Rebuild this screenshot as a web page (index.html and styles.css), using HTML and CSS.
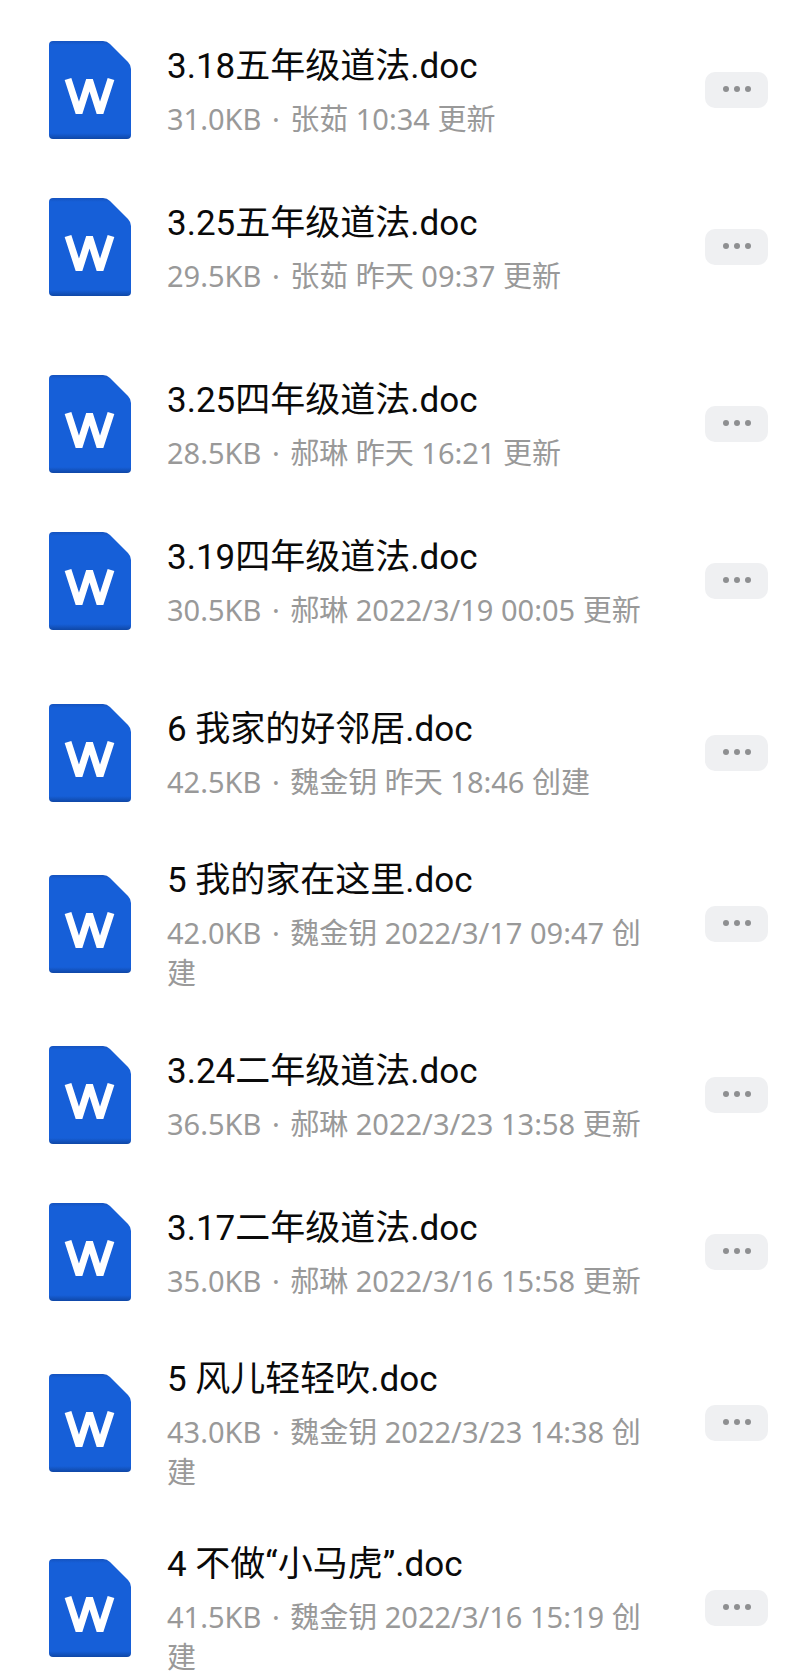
FILE: index.html
```html
<!DOCTYPE html>
<html lang="zh-CN">
<head>
    <meta charset="UTF-8">
    <meta name="viewport" content="width=device-width, initial-scale=1.0">
    <title>文件列表</title>
    <link rel="stylesheet" href="styles.css">
</head>
<body>
    <!-- Shared icons -->
    <svg class="sprite" aria-hidden="true">
        <defs>
            <linearGradient id="paper" x1="0" y1="0" x2="0" y2="1">
                <stop offset="0" stop-color="#1553bf"/>
                <stop offset="0.04" stop-color="#165fd8"/>
                <stop offset="0.94" stop-color="#165fd8"/>
                <stop offset="1" stop-color="#0f47a6"/>
            </linearGradient>
        </defs>
        <symbol id="word" viewBox="0 0 82 98">
            <path fill="url(#paper)" d="M4 0H54Q58 0 61 3L79 21Q82 24 82 28V94Q82 98 78 98H4Q0 98 0 94V4Q0 0 4 0Z"/>
            <path fill="none" stroke="#fff" stroke-width="7" stroke-linejoin="bevel" d="M19 38L30 72L40.500 39L51 72L62 38"/>
        </symbol>
        <symbol id="more" viewBox="0 0 30 6">
            <circle cx="4" cy="3" r="3"/>
            <circle cx="15" cy="3" r="3"/>
            <circle cx="26" cy="3" r="3"/>
        </symbol>
    </svg>

    <main class="files">
        <ul class="group">
            <li class="file">
                <svg class="icon"><use href="#word"/></svg>
                <div class="info">
                    <h2 class="name">3.18五年级道法.doc</h2>
                    <p class="meta">31.0KB <span class="dot">·</span> 张茹 10:34 更新</p>
                </div>
                <button class="more" type="button" aria-label="更多"><svg><use href="#more"/></svg></button>
            </li>
            <li class="file">
                <svg class="icon"><use href="#word"/></svg>
                <div class="info">
                    <h2 class="name">3.25五年级道法.doc</h2>
                    <p class="meta">29.5KB <span class="dot">·</span> 张茹 昨天 09:37 更新</p>
                </div>
                <button class="more" type="button" aria-label="更多"><svg><use href="#more"/></svg></button>
            </li>
        </ul>

        <ul class="group recent">
            <li class="file">
                <svg class="icon"><use href="#word"/></svg>
                <div class="info">
                    <h2 class="name">3.25四年级道法.doc</h2>
                    <p class="meta">28.5KB <span class="dot">·</span> 郝琳 昨天 16:21 更新</p>
                </div>
                <button class="more" type="button" aria-label="更多"><svg><use href="#more"/></svg></button>
            </li>
            <li class="file">
                <svg class="icon"><use href="#word"/></svg>
                <div class="info">
                    <h2 class="name">3.19四年级道法.doc</h2>
                    <p class="meta">30.5KB <span class="dot">·</span> 郝琳 2022/3/19 00:05 更新</p>
                </div>
                <button class="more" type="button" aria-label="更多"><svg><use href="#more"/></svg></button>
            </li>
        </ul>

        <ul class="group older">
            <li class="file">
                <svg class="icon"><use href="#word"/></svg>
                <div class="info">
                    <h2 class="name">6 我家的好邻居.doc</h2>
                    <p class="meta">42.5KB <span class="dot">·</span> 魏金钥 昨天 18:46 创建</p>
                </div>
                <button class="more" type="button" aria-label="更多"><svg><use href="#more"/></svg></button>
            </li>
            <li class="file">
                <svg class="icon"><use href="#word"/></svg>
                <div class="info">
                    <h2 class="name">5 我的家在这里.doc</h2>
                    <p class="meta">42.0KB <span class="dot">·</span> 魏金钥 2022/3/17 09:47 创建</p>
                </div>
                <button class="more" type="button" aria-label="更多"><svg><use href="#more"/></svg></button>
            </li>
            <li class="file">
                <svg class="icon"><use href="#word"/></svg>
                <div class="info">
                    <h2 class="name">3.24二年级道法.doc</h2>
                    <p class="meta">36.5KB <span class="dot">·</span> 郝琳 2022/3/23 13:58 更新</p>
                </div>
                <button class="more" type="button" aria-label="更多"><svg><use href="#more"/></svg></button>
            </li>
            <li class="file">
                <svg class="icon"><use href="#word"/></svg>
                <div class="info">
                    <h2 class="name">3.17二年级道法.doc</h2>
                    <p class="meta">35.0KB <span class="dot">·</span> 郝琳 2022/3/16 15:58 更新</p>
                </div>
                <button class="more" type="button" aria-label="更多"><svg><use href="#more"/></svg></button>
            </li>
            <li class="file">
                <svg class="icon"><use href="#word"/></svg>
                <div class="info">
                    <h2 class="name">5 风儿轻轻吹.doc</h2>
                    <p class="meta">43.0KB <span class="dot">·</span> 魏金钥 2022/3/23 14:38 创建</p>
                </div>
                <button class="more" type="button" aria-label="更多"><svg><use href="#more"/></svg></button>
            </li>
            <li class="file last">
                <svg class="icon"><use href="#word"/></svg>
                <div class="info">
                    <h2 class="name">4 不做“小马虎”.doc</h2>
                    <p class="meta">41.5KB <span class="dot">·</span> 魏金钥 2022/3/16 15:19 创建</p>
                </div>
                <button class="more" type="button" aria-label="更多"><svg><use href="#more"/></svg></button>
            </li>
        </ul>
    </main>
</body>
</html>
```
FILE: styles.css
```css
* {
    box-sizing: border-box;
}

body {
    margin: 0;
    background-color: #fff;
    color: #0a0a0a;
    font-family: Roboto, "Noto Sans CJK SC", sans-serif;
}

.sprite {
    position: absolute;
    width: 0;
    height: 0;
}

.files {
    padding: 12px 32px 0 49px;
}

.group {
    margin: 0 0 20px;
    padding: 0;
    list-style: none;
}

.group.recent {
    margin-bottom: 15px;
}

.group.older {
    margin-bottom: 0;
}

.file {
    display: flex;
    align-items: center;
    min-height: 157px;
    padding: 23px 0 24px;
}

.file.last {
    padding-bottom: 0;
}

.icon {
    flex: none;
    width: 82px;
    height: 98px;
}

.info {
    flex: 1;
    min-width: 0;
    margin: 0 50px 0 36px;
    padding-top: 2px;
}

.name {
    margin: 0 0 8px;
    font-size: 35px;
    font-weight: 400;
    line-height: 48px;
}

.meta {
    margin: 0;
    color: #999;
    font-family: "Noto Sans", "Noto Sans CJK SC", sans-serif;
    font-size: 29px;
    line-height: 40px;
}

.dot {
    margin: 0 3px;
}

.more {
    display: flex;
    flex: none;
    align-items: center;
    justify-content: center;
    width: 63px;
    height: 36px;
    padding: 0 0 2px;
    border: none;
    border-radius: 10px;
    background-color: #eff0f2;
    cursor: pointer;
}

.more svg {
    width: 30px;
    height: 6px;
    fill: #8e8f91;
}
```
